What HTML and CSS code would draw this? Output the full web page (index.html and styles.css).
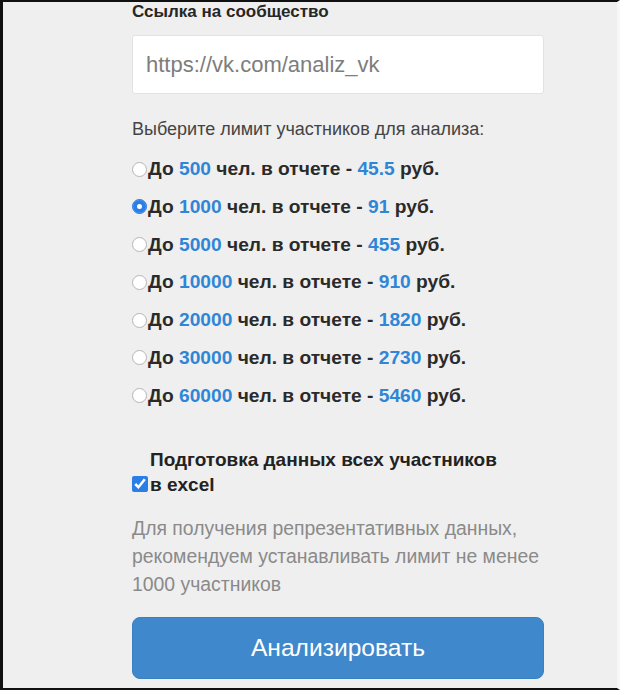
FILE: index.html
```html
<!DOCTYPE html>
<html lang="ru">
<head>
    <meta charset="UTF-8">
    <title>Анализ сообщества</title>
    <link rel="stylesheet" href="styles.css">
</head>
<body>
    <div class="frame">
        <form class="form">
            <h3 class="title">Ссылка на сообщество</h3>
            <input class="field" type="text" placeholder="https://vk.com/analiz_vk">

            <p class="hint">Выберите лимит участников для анализа:</p>

            <div class="limits">
                <label class="limit"><input type="radio" name="limit">До <span class="num">500</span>&nbsp;чел. в отчете - <span class="num">45.5</span>&nbsp;руб.</label>
                <label class="limit"><input type="radio" name="limit" checked>До <span class="num">1000</span>&nbsp;чел. в отчете - <span class="num">91</span>&nbsp;руб.</label>
                <label class="limit"><input type="radio" name="limit">До <span class="num">5000</span>&nbsp;чел. в отчете - <span class="num">455</span>&nbsp;руб.</label>
                <label class="limit"><input type="radio" name="limit">До <span class="num">10000</span>&nbsp;чел. в отчете - <span class="num">910</span>&nbsp;руб.</label>
                <label class="limit"><input type="radio" name="limit">До <span class="num">20000</span>&nbsp;чел. в отчете - <span class="num">1820</span>&nbsp;руб.</label>
                <label class="limit"><input type="radio" name="limit">До <span class="num">30000</span>&nbsp;чел. в отчете - <span class="num">2730</span>&nbsp;руб.</label>
                <label class="limit"><input type="radio" name="limit">До <span class="num">60000</span>&nbsp;чел. в отчете - <span class="num">5460</span>&nbsp;руб.</label>
            </div>

            <div class="export-title">Подготовка данных всех участников</div>
            <label class="export"><input type="checkbox" checked>в excel</label>

            <p class="note">Для получения репрезентативных данных,<br>рекомендуем устанавливать лимит не менее<br>1000 участников</p>

            <button class="btn" type="button">Анализировать</button>
        </form>
    </div>
</body>
</html>
```

FILE: styles.css
```css
html, body {
    margin: 0;
    padding: 0;
}
body {
    font-family: "Liberation Sans", Arial, sans-serif;
    color: #222;
}
.frame {
    box-sizing: border-box;
    height: 690px;
    background: #efefef;
    border-top: 2px solid #111;
    border-left: 3px solid #111;
    border-bottom: 2px solid #111;
    border-right: 3px solid #f7f7f7;
}
.form {
    width: 412px;
    margin-left: 129px;
}
.title {
    margin: 0;
    font-size: 17px;
    line-height: 20px;
    font-weight: bold;
    color: #262626;
}
.field {
    display: block;
    box-sizing: border-box;
    width: 100%;
    height: 59px;
    margin-top: 13px;
    padding: 0 13px;
    border: 1px solid #e2e2e2;
    border-radius: 3px;
    background: #fff;
    font-family: inherit;
    font-size: 22px;
    outline: none;
}
.field::placeholder {
    color: #7d7d7d;
}
.hint {
    margin: 24.5px 0 0;
    font-size: 18px;
    line-height: 20px;
    color: #444;
}
.limits {
    display: flex;
    flex-direction: column;
    gap: 17.8px;
    margin-top: 20.5px;
}
.limit {
    display: flex;
    align-items: center;
    height: 20px;
    font-size: 19.2px;
    font-weight: bold;
    color: #2a2a2a;
    white-space: pre;
}
.limit input {
    appearance: none;
    box-sizing: border-box;
    width: 15px;
    height: 15px;
    margin: 0 1px 0 0;
    border: 1px solid #b5b5b5;
    border-radius: 50%;
    background: #fff;
}
.limit input:checked {
    border-color: #2a7ee6;
    background: #2a7ee6;
    box-shadow: inset 0 0 0 4px #2a7ee6, inset 0 0 0 7px #fff;
}
.num {
    color: #2f86d6;
}
.export-title {
    margin-top: 44.5px;
    padding-left: 18px;
    font-size: 19px;
    line-height: 20px;
    font-weight: bold;
}
.export {
    display: flex;
    align-items: flex-start;
    margin-top: 5px;
    font-size: 19px;
    line-height: 20px;
    font-weight: bold;
}
.export input {
    width: 16px;
    height: 16px;
    margin: 1px 2px 0 0;
    accent-color: #2a7ee6;
}
.note {
    margin: 18.5px 0 0;
    font-size: 19.4px;
    line-height: 28px;
    color: #8a8a8a;
    white-space: nowrap;
}
.btn {
    display: block;
    width: 100%;
    height: 62px;
    margin-top: 19.5px;
    border: 1px solid #3a7fc0;
    border-radius: 8px;
    background: #3f88cc;
    color: #fff;
    font-family: inherit;
    font-size: 24.6px;
    cursor: pointer;
}
```
